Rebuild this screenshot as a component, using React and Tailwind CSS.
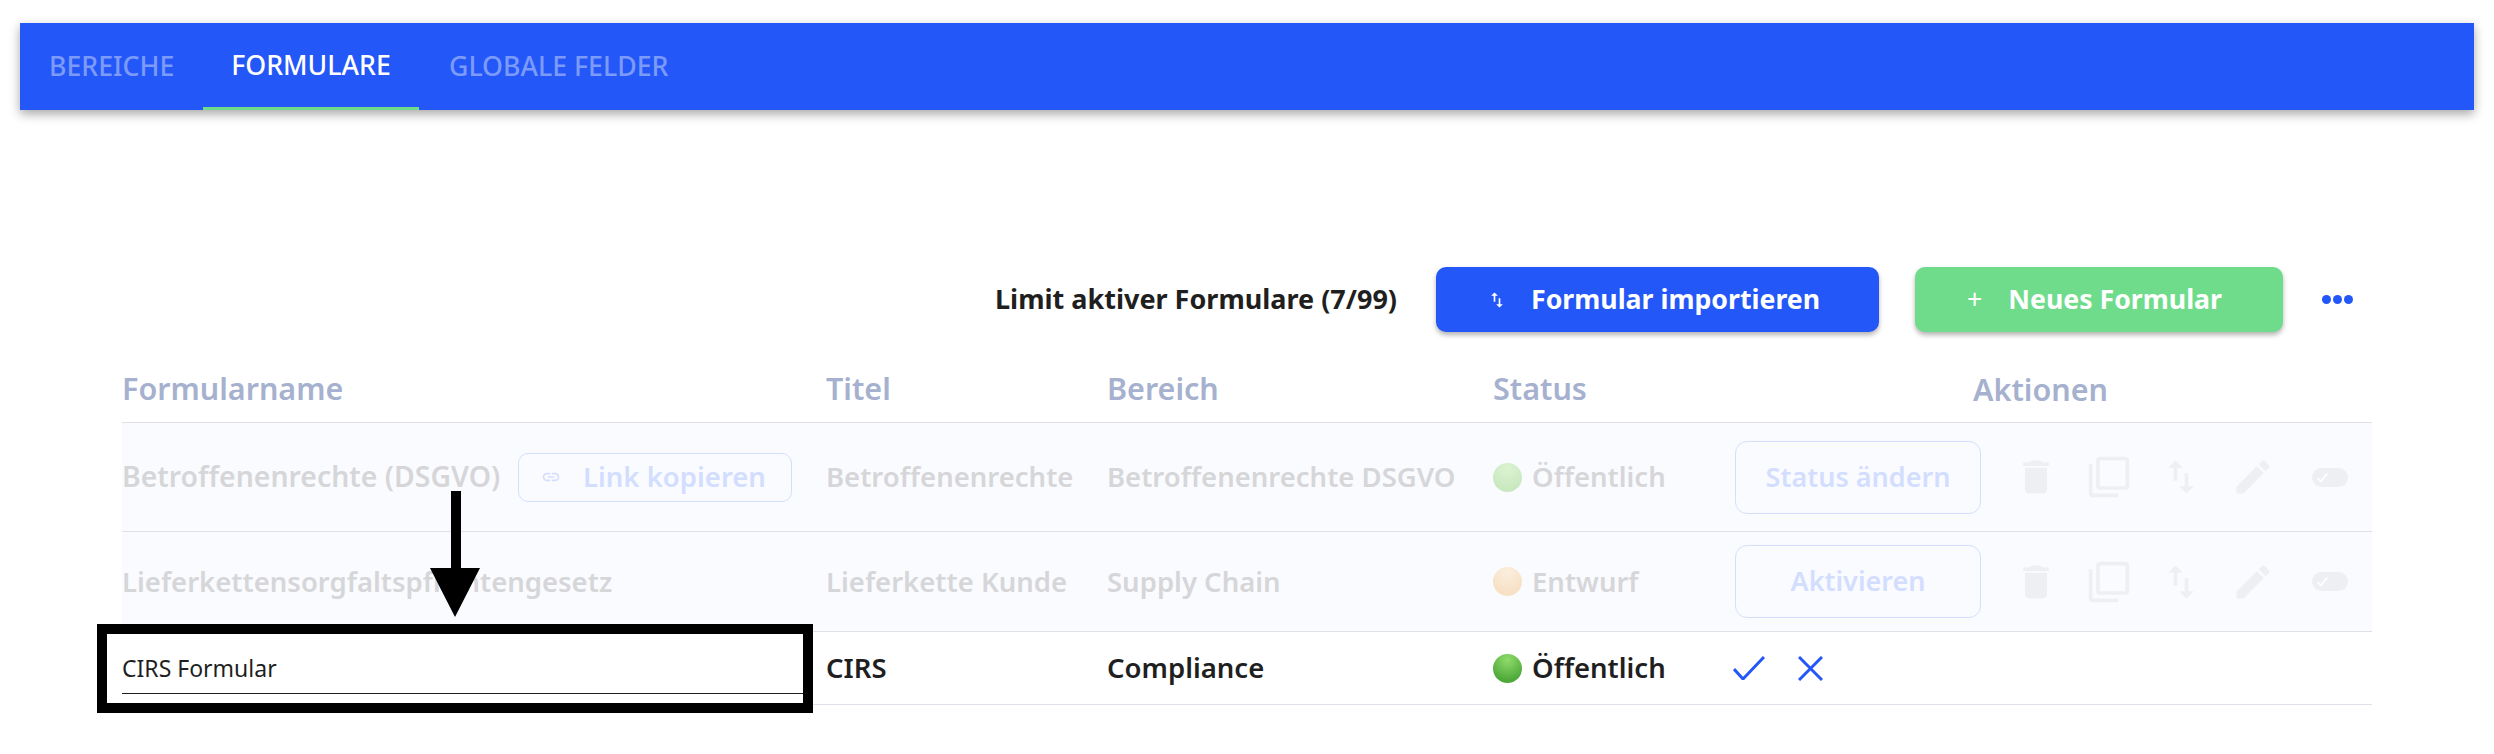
import React from 'react';

const SWAP = 'M16 17.01V10h-2v7.01h-3L15 21l4-3.99h-3zM9 3L5 6.99h3V14h2V6.99h3L9 3z';

const Icon = ({ d, className }) => (
  <svg viewBox="0 0 24 24" fill="currentColor" className={className}>
    <path d={d} />
  </svg>
);

const RowActions = ({ label }) => (
  <div className="flex items-center">
    <button className="w-[246px] h-[73px] shrink-0 rounded-[12px] border border-[#d3e0fd] text-[#d3deff] text-[27px] font-semibold">
      {label}
    </button>
    <div className="flex items-center text-[#eeeff2]">
      <Icon className="w-[44px] h-[44px] ml-[33px]" d="M6 19c0 1.1.9 2 2 2h8c1.1 0 2-.9 2-2V7H6v12zM19 4h-3.5l-1-1h-5l-1 1H5v2h14V4z" />
      <Icon className="w-[44px] h-[44px] ml-[29px]" d="M3 5H1v16c0 1.1.9 2 2 2h14v-2H3V5zm18-4H7c-1.1 0-2 .9-2 2v14c0 1.1.9 2 2 2h14c1.1 0 2-.9 2-2V3c0-1.1-.9-2-2-2zm0 16H7V3h14v14z" />
      <Icon className="w-[44px] h-[44px] ml-[28px]" d={SWAP} />
      <Icon className="w-[44px] h-[44px] ml-[28px]" d="M3 17.25V21h3.75L17.81 9.94l-3.75-3.75L3 17.25zM20.71 7.04c.39-.39.39-1.02 0-1.41l-2.34-2.34c-.39-.39-1.02-.39-1.41 0l-1.83 1.83 3.75 3.75 1.83-1.83z" />
      <div className="w-[36px] h-[19px] ml-[37px] rounded-full bg-[#eeeff2] flex items-center pl-[4px]">
        <svg viewBox="0 0 24 24" fill="none" stroke="#fff" strokeWidth="3" className="w-[13px] h-[13px]">
          <path d="M3 13l6 6L21 5" />
        </svg>
      </div>
    </div>
  </div>
);

const Dot = ({ tone }) => {
  const tones = {
    green: 'bg-[radial-gradient(circle_at_50%_20%,#8fdc6a,#4ea83a_75%)]',
    paleGreen: 'bg-[radial-gradient(circle_at_50%_20%,#dcf3d2,#c8e8bf_75%)]',
    paleOrange: 'bg-[radial-gradient(circle_at_50%_20%,#fbeedd,#f7e0c4_75%)]',
  };
  return <span className={`w-[29px] h-[29px] rounded-full shrink-0 mr-[10px] ${tones[tone]}`} />;
};

const App = () => {
  const grid = 'grid grid-cols-[704px_281px_386px_242px_1fr] items-center';
  const faded = 'text-[#d6d6d9] text-[27.5px] font-semibold';

  return (
    <div className="min-h-screen bg-white pt-[23px] font-['Noto_Sans',sans-serif] overflow-hidden">
      <nav className="mx-[20px] h-[87px] flex bg-[#2457f8] shadow-[0_4px_10px_rgba(0,0,0,0.35)] text-[26.7px] font-medium uppercase">
        <a className="px-[29px] w-[183px] flex items-center whitespace-nowrap text-[#7c9bf9]">Bereiche</a>
        <a className="w-[216px] flex items-center justify-center text-white border-b-[3px] border-[#6edc8b]">Formulare</a>
        <a className="ml-px px-[29px] flex items-center text-[#7c9bf9]">Globale Felder</a>
      </nav>

      <div className="mt-[157px] pr-[141px] flex justify-end items-center">
        <span className="text-[27px] font-bold text-[#1f1f1f]">Limit aktiver Formulare (7/99)</span>
        <button className="ml-[39px] w-[443px] h-[65px] rounded-[10px] bg-[#2457f8] text-white text-[26.7px] font-bold shadow-[0_3px_5px_rgba(0,0,0,0.3)] flex items-center pl-[51px]">
          <Icon className="w-[20px] h-[20px] mr-[24px]" d={SWAP} />
          Formular importieren
        </button>
        <button className="ml-[36px] w-[368px] h-[65px] rounded-[10px] bg-[#6edc8b] text-white text-[26.7px] font-bold shadow-[0_3px_5px_rgba(0,0,0,0.3)] flex items-center pl-[52px]">
          <span className="font-normal mr-[26px]">+</span>
          Neues Formular
        </button>
        <div className="ml-[39px] flex gap-[2px]">
          <span className="w-[9px] h-[9px] rounded-full bg-[#2457f8]" />
          <span className="w-[9px] h-[9px] rounded-full bg-[#2457f8]" />
          <span className="w-[9px] h-[9px] rounded-full bg-[#2457f8]" />
        </div>
      </div>

      <div className="mx-[122px] mt-[25px]">
        <div className={`${grid} h-[66px] pb-[2px] text-[30.5px] font-semibold text-[#a5b1ce] border-b border-[#dfe0e8]`}>
          <span>Formularname</span>
          <span>Titel</span>
          <span>Bereich</span>
          <span>Status</span>
          <span className="pl-[238px] pt-[3px]">Aktionen</span>
        </div>

        <div className={`${grid} h-[109px] bg-[#fafbff] border-b border-[#dfe0e8] ${faded}`}>
          <div className="flex items-center">
            <span className="w-[372px] text-[28.4px] -mt-[2px] whitespace-nowrap">Betroffenenrechte (DSGVO)</span>
            <button className="ml-[24px] w-[274px] h-[49px] rounded-[10px] border border-[#d3e0fd] text-[#d3deff] text-[27.5px] flex items-center pl-[22px]">
              <Icon className="w-[20px] h-[20px] mr-[22px]" d="M3.9 12c0-1.71 1.39-3.1 3.1-3.1h4V7H7c-2.76 0-5 2.24-5 5s2.24 5 5 5h4v-1.9H7c-1.71 0-3.1-1.39-3.1-3.1zM8 13h8v-2H8v2zm9-6h-4v1.9h4c1.71 0 3.1 1.39 3.1 3.1s-1.39 3.1-3.1 3.1h-4V17h4c2.76 0 5-2.24 5-5s-2.24-5-5-5z" />
              Link kopieren
            </button>
          </div>
          <span>Betroffenenrechte</span>
          <span>Betroffenenrechte DSGVO</span>
          <span className="flex items-center"><Dot tone="paleGreen" />Öffentlich</span>
          <RowActions label="Status ändern" />
        </div>

        <div className={`${grid} h-[100px] bg-[#fafbff] border-b border-[#dfe0e8] ${faded}`}>
          <span>Lieferkettensorgfaltspflichtengesetz</span>
          <span>Lieferkette Kunde</span>
          <span>Supply Chain</span>
          <span className="flex items-center"><Dot tone="paleOrange" />Entwurf</span>
          <RowActions label="Aktivieren" />
        </div>

        <div className={`${grid} h-[73px] border-b border-[#dfe0e8] text-[27.5px] font-semibold text-[#1f1f1f]`}>
          <div className="relative h-full pr-[23px]">
            <input
              defaultValue="CIRS Formular"
              className="w-full h-[62px] pt-[10px] border-b border-[#1f1f1f] text-[23px] font-normal outline-none"
            />
            <div className="absolute left-[-25px] top-[-8px] w-[716px] h-[89px] border-[10px] border-black" />
            <svg viewBox="0 0 50 126" className="absolute left-[308px] top-[-141px] w-[50px] h-[126px]">
              <path d="M21 0h10v77h19L25 126 0 77h21z" fill="#000" />
            </svg>
          </div>
          <span>CIRS</span>
          <span>Compliance</span>
          <span className="flex items-center"><Dot tone="green" />Öffentlich</span>
          <div className="flex items-center text-[#2457f8] -ml-[2px]">
            <svg viewBox="0 0 32 24" fill="none" stroke="currentColor" strokeWidth="3" className="w-[32px] h-[24px]">
              <path d="M1 13l9 10L31 1" />
            </svg>
            <svg viewBox="0 0 25 25" fill="none" stroke="currentColor" strokeWidth="3" className="w-[25px] h-[25px] ml-[33px]">
              <path d="M1 1l23 23M24 1L1 24" />
            </svg>
          </div>
        </div>
      </div>
    </div>
  );
};

export default App;
